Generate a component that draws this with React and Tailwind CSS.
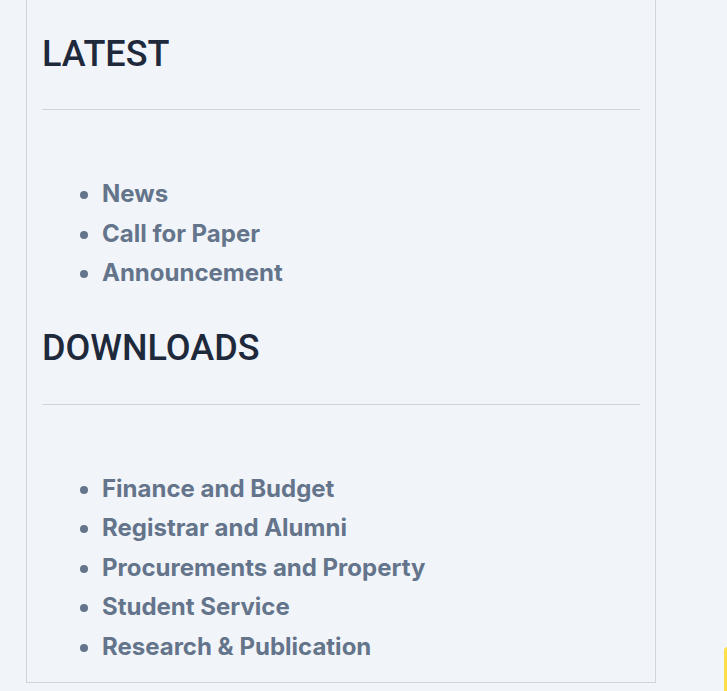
export default function App() {
  const latest = ["News", "Call for Paper", "Announcement"];
  const downloads = [
    "Finance and Budget",
    "Registrar and Alumni",
    "Procurements and Property",
    "Student Service",
    "Research & Publication",
  ];
  const Heading = ({ children, first }) => (
    <h2
      className={`${first ? "pt-[33px]" : "mt-[34px]"} text-[36px] leading-[43px] text-[#1e293b] font-medium`}
      style={{ fontFamily: "Roboto, 'Liberation Sans', sans-serif" }}
    >
      {children}
    </h2>
  );
  const List = ({ items }) => (
    <ul
      className="mt-[64px] list-disc pl-[60px] text-[24px] leading-[39.5px] font-bold text-[#64748b]"
      style={{ fontFamily: "Inter, 'Liberation Sans', sans-serif" }}
    >
      {items.map((t) => (
        <li key={t}>{t}</li>
      ))}
    </ul>
  );
  return (
    <div className="relative min-h-[691px] w-full bg-[#f1f5f9] overflow-hidden">
      <div className="ml-[26px] w-[630px] border-x border-b border-[#d1d5db] px-[15px] pb-[16px]">
        <Heading first>LATEST</Heading>
        <div className="mt-[33px] h-px bg-[#d1d5db]" />
        <List items={latest} />
        <Heading>DOWNLOADS</Heading>
        <div className="mt-[34px] h-px bg-[#d1d5db]" />
        <List items={downloads} />
      </div>
      <div className="absolute left-[724px] top-[647px] h-[60px] w-[40px] rounded-tl-[4px] bg-[#fde047]" />
    </div>
  );
}
